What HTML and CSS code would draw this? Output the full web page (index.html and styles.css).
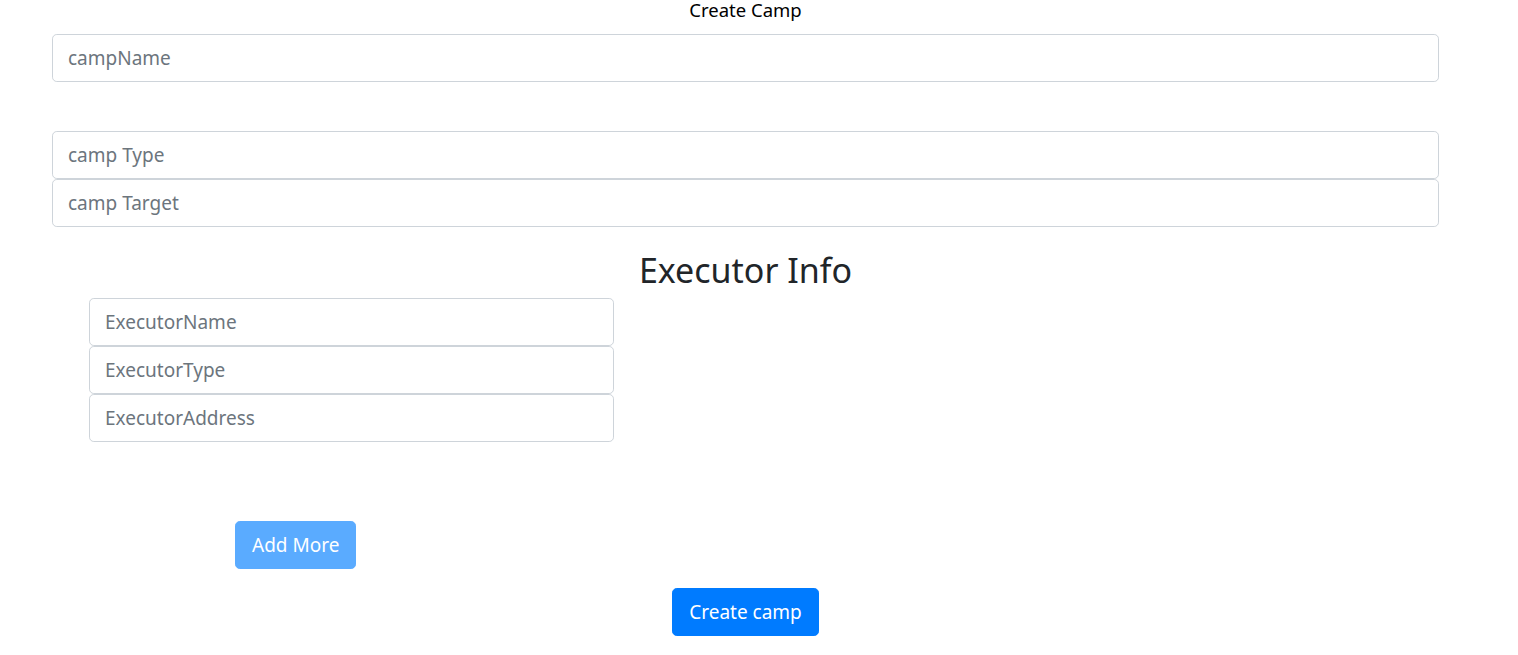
FILE: index.html
```html
<!DOCTYPE html>
<html lang="en">
<head>
<meta charset="utf-8">
<title>Create Camp</title>
<link rel="stylesheet" href="styles.css">
</head>
<body>
<div class="page">
  <div class="title">Create Camp</div>
  <form class="camp-form">
    <input class="field" type="text" placeholder="campName">
    <div class="spacer"></div>
    <input class="field" type="text" placeholder="camp Type">
    <input class="field" type="text" placeholder="camp Target">
    <h1 class="heading">Executor Info</h1>
    <div class="executor">
      <input class="field" type="text" placeholder="ExecutorName">
      <input class="field" type="text" placeholder="ExecutorType">
      <input class="field" type="text" placeholder="ExecutorAddress">
    </div>
    <div class="add-row">
      <button type="button" class="btn btn-light-blue">Add More</button>
    </div>
    <div class="submit-row">
      <button type="submit" class="btn btn-blue">Create camp</button>
    </div>
  </form>
</div>
</body>
</html>
```
FILE: styles.css
```css
* { box-sizing: border-box; }
html, body { margin: 0; padding: 0; background: #fff; }
body {
  font-family: "Noto Sans", "Open Sans", sans-serif;
  color: #212529;
}
.page {
  padding: 0 79px 0 52px;
}
.title {
  text-align: center;
  font-size: 18.5px;
  line-height: 20px;
  height: 34px;
  color: #000;
}
.camp-form {
  display: flex;
  flex-direction: column;
}
.field {
  display: block;
  width: 100%;
  height: 48px;
  padding: 8px 16px 8px 15px;
  font-family: inherit;
  font-size: 19px;
  line-height: 1.5;
  color: #495057;
  background: #fff;
  border: 1px solid #ced4da;
  border-radius: 4.8px;
  outline: none;
}
.field::placeholder { color: #6c757d; opacity: 1; }
.spacer { height: 49px; }
.heading {
  margin: 19px 0 4px;
  font-size: 34px;
  font-weight: 400;
  line-height: 48px;
  text-align: center;
  color: #212529;
}
.executor {
  width: 525px;
  margin-left: 37px;
}
.add-row {
  padding-top: 79px;
  padding-left: 183px;
}
.submit-row {
  display: flex;
  justify-content: center;
  padding-top: 19px;
}
.btn {
  height: 48px;
  padding: 8px 16px;
  font-family: inherit;
  font-size: 19px;
  line-height: 1.5;
  color: #fff;
  border: 1px solid transparent;
  border-radius: 4.8px;
}
.btn-light-blue { background: #5aabff; border-color: #5aabff; }
.btn-blue { background: #007bff; border-color: #007bff; }
```
